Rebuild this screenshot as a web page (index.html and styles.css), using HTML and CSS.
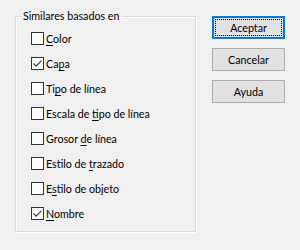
FILE: index.html
```html
<!DOCTYPE html>
<html lang="es">
<head>
<meta charset="utf-8">
<link rel="stylesheet" href="styles.css">
</head>
<body>
<div class="dialog">
  <fieldset class="group">
    <legend class="group-title">Similares basados en</legend>
    <div class="rows">
      <div class="row"><span class="box"></span><span class="lbl"><u>C</u>olor</span></div>
      <div class="row"><span class="box"><svg width="13" height="13" viewBox="0 0 13 13"><path d="M2.5 6.5 L5.2 9.2 L10.5 3.6" fill="none" stroke="#333" stroke-width="1.1"/></svg></span><span class="lbl">Ca<u>p</u>a</span></div>
      <div class="row"><span class="box"></span><span class="lbl">Ti<u>p</u>o de línea</span></div>
      <div class="row"><span class="box"></span><span class="lbl">Escala de <u>t</u>ipo de línea</span></div>
      <div class="row"><span class="box"></span><span class="lbl">Grosor <u>d</u>e línea</span></div>
      <div class="row"><span class="box"></span><span class="lbl">Estilo de <u>t</u>razado</span></div>
      <div class="row"><span class="box"></span><span class="lbl">E<u>s</u>tilo de objeto</span></div>
      <div class="row"><span class="box"><svg width="13" height="13" viewBox="0 0 13 13"><path d="M2.5 6.5 L5.2 9.2 L10.5 3.6" fill="none" stroke="#333" stroke-width="1.1"/></svg></span><span class="lbl"><u>N</u>ombre</span></div>
    </div>
  </fieldset>
  <div class="buttons">
    <div class="btn default"><span>Aceptar</span></div>
    <div class="btn">Cancelar</div>
    <div class="btn">Ayuda</div>
  </div>
</div>
</body>
</html>
```
FILE: styles.css
```css
html, body {
  margin: 0;
  padding: 0;
  background: #f0f0f0;
  width: 300px;
  height: 250px;
  overflow: hidden;
}
.dialog {
  display: flex;
  align-items: flex-start;
  padding: 8px 0 0 15px;
  font-family: "Lato", "Noto Sans", sans-serif;
  font-size: 10.7px;
  color: #000;
}
.group {
  box-sizing: border-box;
  width: 181px;
  margin: 0;
  padding: 0 0 5px 6px;
  border: 1px solid #dcdcdc;
  box-shadow: 1px 1px 0 #fff, inset 1px 1px 0 #fff;
  min-width: 0;
}
.group-title {
  padding: 0 3px 0 1px;
  line-height: 16px;
  height: 16px;
}
.rows {
  padding: 2px 0 0 9px;
  display: flex;
  flex-direction: column;
}
.row {
  height: 25px;
  display: flex;
  align-items: center;
  gap: 2px;
  white-space: nowrap;
}
.box {
  box-sizing: border-box;
  width: 13px;
  height: 13px;
  border: 1px solid #333;
  background: #fff;
  flex: none;
  position: relative;
}
.box svg {
  position: absolute;
  left: -1px;
  top: -1px;
}
.lbl {
  line-height: 16px;
}
.lbl u {
  text-underline-offset: 2px;
}
.buttons {
  margin: 8px 0 0 16px;
  display: flex;
  flex-direction: column;
  gap: 9px;
}
.btn {
  box-sizing: border-box;
  width: 73px;
  height: 23px;
  background: #e1e1e1;
  border: 1px solid #adadad;
  display: flex;
  align-items: center;
  justify-content: center;
  line-height: 16px;
}
.btn.default {
  border-color: #0078d7;
  box-shadow: inset 0 0 0 1px #0078d7;
  outline: 1px dotted #000;
  outline-offset: -4px;
}
```
